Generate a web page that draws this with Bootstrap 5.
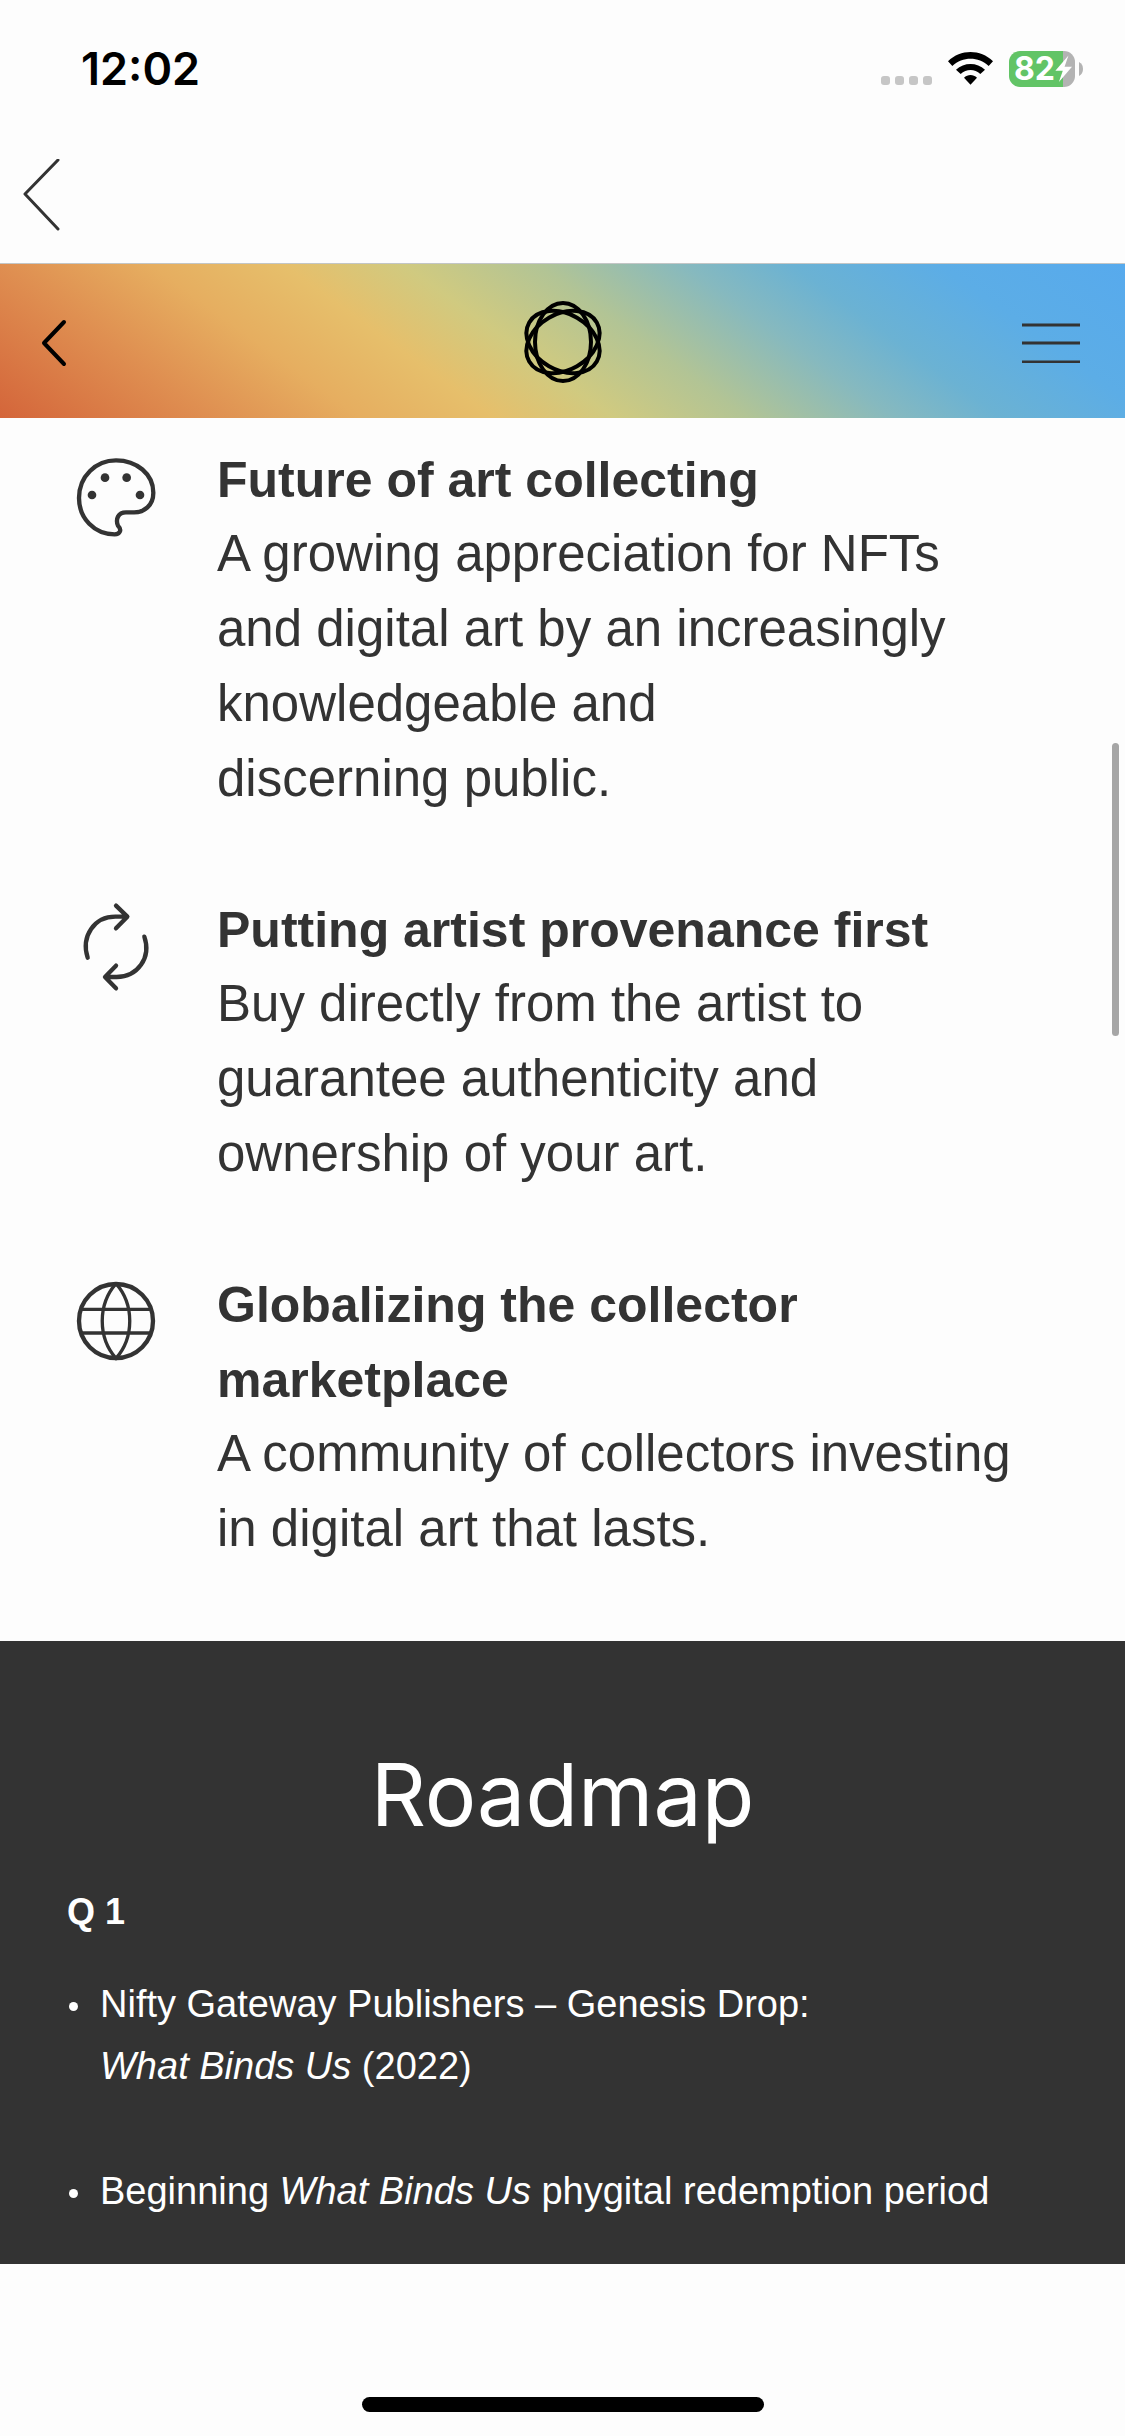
<!DOCTYPE html>
<html lang="en">
<head>
<meta charset="utf-8">
<meta name="viewport" content="width=device-width, initial-scale=1">
<title>Roadmap</title>
<link href="https://cdn.jsdelivr.net/npm/bootstrap@5.3.0/dist/css/bootstrap.min.css" rel="stylesheet">
<style>
  body { font-family: "Liberation Sans", Arial, sans-serif; color: #333; background: #fdfdfd; }
  .status-bar { height: 135px; padding: 2px 42px 0 81px; }
  .clock { font: 600 45px/56px Inter, sans-serif; color: #000; }
  .signal-dots { gap: 5px; }
  .signal-dot { width: 9px; height: 9px; border-radius: 3px; background: #c6c6c6; }
  .battery-body { width: 66px; height: 36px; border-radius: 11px; padding-left: 5px;
    background: linear-gradient(90deg, #62c466 54px, #b3b3b3 54px);
    font: 700 32px/36px Inter, sans-serif; color: #fff; }
  .app-bar { height: 129px; padding: 0 21px; border-bottom: 1px solid #c3c6c6; }
  .site-header { height: 154px; padding: 2px 44px 0 39px;
    background: linear-gradient(36deg, #d4653a 0%, #df8f51 16%, #e6ae60 27%, #e6bf6b 37%, #d0ca80 46%, #b2c495 56%, #86b9bf 67%, #6bb2d3 75%, #5cade6 86%, #57aaed 100%); }
  .features { padding: 25px 105px 75px 76px; gap: 77px; }
  .feature-row { gap: 61px; }
  .feature-row svg { margin-top: 9px; }
  .feature-title { font-size: 50px; line-height: 75px; font-weight: 700; margin-bottom: -2px; }
  .feature-text { font-size: 51px; line-height: 75px; }
  .roadmap { background: #333; color: #fff; padding: 106px 67px 42px; font-size: 38px; line-height: 62px; }
  .roadmap-title { font: 400 86px/96px Inter, sans-serif; margin-bottom: 38px; }
  .quarter { font-size: 36px; line-height: 62px; font-weight: 700; margin-bottom: 30px; }
  .milestones { gap: 63px; }
  .milestones li { gap: 22px; padding-left: 2px; }
  .bullet { width: 9px; height: 9px; margin-top: 29px; border-radius: 50%; background: #fff; }
  .home-area { min-height: 172px; padding-bottom: 24px; }
  .home-pill { width: 402px; height: 15px; border-radius: 8px; background: #000; }
  .scroll-thumb { position: absolute; top: 743px; right: 6px; width: 7px; height: 293px; border-radius: 4px; background: #a6a6a6; }
</style>
<script src="https://cdn.jsdelivr.net/npm/bootstrap@5.3.0/dist/js/bootstrap.bundle.min.js"></script>
</head>
<body class="min-vh-100 d-flex flex-column position-relative">

<div class="status-bar d-flex align-items-center justify-content-between">
  <span class="clock">12:02</span>
  <div class="d-flex align-items-center">
    <div class="signal-dots d-flex align-items-end me-3 pt-4">
      <span class="signal-dot"></span><span class="signal-dot"></span><span class="signal-dot"></span><span class="signal-dot"></span>
    </div>
    <svg class="me-3" width="45" height="33" viewBox="326 96 135 99" aria-hidden="true">
      <path d="M326 124C364 87 423 87 461 124L448 138C417 109 370 109 339 138Z"/>
      <path d="M350 149C374 126 413 126 437 149L423 162C406 146 381 146 364 162Z"/>
      <path d="M374 173C385 162 402 162 413 173L393.500 194Z"/>
    </svg>
    <div class="battery-body d-flex align-items-center">
      <span>82</span>
      <svg width="17" height="27" viewBox="644 108 48 76" aria-hidden="true"><path fill="#fff" d="M682 109L645 152H666L655 184L692 141H671Z"/></svg>
    </div>
    <svg class="ms-1" width="4" height="14" viewBox="0 0 4 14" aria-hidden="true"><path fill="#b3b3b3" d="M0 0Q4 2 4 7T0 14Z"/></svg>
  </div>
</div>

<nav class="app-bar d-flex align-items-start" aria-label="App">
  <a href="#" class="pt-4" aria-label="Back">
    <svg class="d-block" width="40" height="72" viewBox="0 0 40 72" fill="none" stroke="#333" stroke-width="3" stroke-linecap="round" stroke-linejoin="round"><path d="M37 1L4 35L37 70"/></svg>
  </a>
</nav>

<header class="site-header d-flex align-items-center justify-content-between">
  <a href="#" aria-label="Previous page">
    <svg class="d-block" width="65" height="50" viewBox="0 0 65 50" fill="none" stroke="#000" stroke-width="4" stroke-linecap="round" stroke-linejoin="round"><path d="M25 5L5 26L25 47"/></svg>
  </a>
  <a href="#" aria-label="Home">
    <svg class="d-block" width="84" height="84" viewBox="-42 -42 84 84" fill="none" stroke="#000" stroke-width="4">
      <ellipse rx="28" ry="39"/><ellipse rx="28" ry="39" transform="rotate(60)"/><ellipse rx="28" ry="39" transform="rotate(120)"/>
    </svg>
  </a>
  <button type="button" class="btn p-0 border-0" aria-label="Menu">
    <svg class="d-block" width="60" height="42" viewBox="0 0 60 42" stroke="#333" stroke-width="3"><path d="M1 4H59M1 22H59M1 41H59"/></svg>
  </button>
</header>

<main>
  <section class="features d-flex flex-column">
    <article class="feature-row d-flex align-items-start">
      <svg class="flex-shrink-0" width="80" height="90" viewBox="50 36 240 270" fill="none" stroke="#333" stroke-width="13" aria-hidden="true">
        <path d="M170 61C232 61 282 102 282 158C282 196 255 218 222 217H200C176 217 168 238 176 257C189 270 181 283 166 283C105 283 59 235 59 174C59 108 110 61 170 61Z"/>
        <g fill="#333" stroke="none"><circle cx="137" cy="113" r="13"/><circle cx="202" cy="113" r="13"/><circle cx="98" cy="165" r="13"/><circle cx="242" cy="165" r="13"/></g>
      </svg>
      <div>
        <h2 class="feature-title">Future of art collecting</h2>
        <p class="feature-text mb-0">A growing appreciation for NFTs and&nbsp;digital art by an increasingly knowledgeable and discerning&nbsp;public.</p>
      </div>
    </article>
    <article class="feature-row d-flex align-items-start">
      <svg class="flex-shrink-0" width="80" height="90" viewBox="50 37 240 270" fill="none" stroke="#333" stroke-width="13" stroke-linecap="round" stroke-linejoin="round" aria-hidden="true">
        <path d="M85 204C64 138 106 81 168 81H203M170 48L204 81L170 116M255 141C277 205 234 262 172 262H138M170 228L137 262L170 296"/>
      </svg>
      <div>
        <h2 class="feature-title">Putting artist provenance first</h2>
        <p class="feature-text mb-0">Buy directly from the artist to guarantee authenticity and ownership&nbsp;of&nbsp;your&nbsp;art.</p>
      </div>
    </article>
    <article class="feature-row d-flex align-items-start">
      <svg class="flex-shrink-0" width="80" height="90" viewBox="50 48 240 270" fill="none" stroke="#333" stroke-width="10" aria-hidden="true">
        <circle cx="170" cy="180" r="111" stroke-width="13"/>
        <path d="M65 145H275M65 216H275M170 68C115 130 115 230 170 292C225 230 225 130 170 68"/>
      </svg>
      <div>
        <h2 class="feature-title">Globalizing the collector marketplace</h2>
        <p class="feature-text mb-0">A community of collectors investing in&nbsp;digital art that lasts.</p>
      </div>
    </article>
  </section>

  <section class="roadmap">
    <h2 class="roadmap-title text-center">Roadmap</h2>
    <h3 class="quarter">Q 1</h3>
    <ul class="milestones list-unstyled d-flex flex-column mb-0">
      <li class="d-flex align-items-start"><span class="bullet flex-shrink-0"></span><span>Nifty Gateway Publishers – Genesis Drop:<br><em>What Binds Us</em> (2022)</span></li>
      <li class="d-flex align-items-start"><span class="bullet flex-shrink-0"></span><span>Beginning <em>What Binds Us</em> phygital redemption period</span></li>
    </ul>
  </section>
</main>

<footer class="home-area flex-grow-1 d-flex align-items-end justify-content-center">
  <div class="home-pill"></div>
</footer>

<div class="scroll-thumb"></div>
</body>
</html>
